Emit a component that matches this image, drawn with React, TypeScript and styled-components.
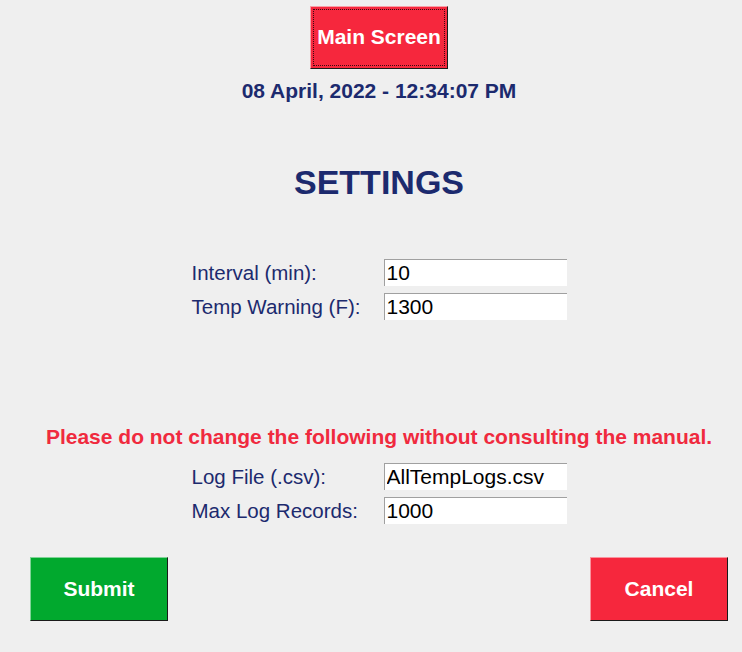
import React from 'react'
import styled, { createGlobalStyle } from 'styled-components'

const GlobalStyle = createGlobalStyle`
  html, body {
    margin: 0;
    padding: 0;
    background: #efefef;
  }
  body {
    font-family: "Liberation Sans", Arial, sans-serif;
  }
`

interface Field {
  label: string
  value: string
}

const mainFields: Field[] = [
  { label: 'Interval (min):', value: '10' },
  { label: 'Temp Warning (F):', value: '1300' },
]

const fileFields: Field[] = [
  { label: 'Log File (.csv):', value: 'AllTempLogs.csv' },
  { label: 'Max Log Records:', value: '1000' },
]

const FieldGrid: React.FC<{ fields: Field[] }> = ({ fields }) => (
  <Grid>
    {fields.map((f) => (
      <React.Fragment key={f.label}>
        <Label>{f.label}</Label>
        <Input defaultValue={f.value} />
      </React.Fragment>
    ))}
  </Grid>
)

export default function App() {
  return (
    <>
      <GlobalStyle />
      <Page>
        <MainButton>
          <FocusRing>Main Screen</FocusRing>
        </MainButton>
        <DateLine>08 April, 2022 - 12:34:07 PM</DateLine>
        <Heading>SETTINGS</Heading>
        <FieldGrid fields={mainFields} />
        <Warning>Please do not change the following without consulting the manual.</Warning>
        <FieldGrid fields={fileFields} />
        <Actions>
          <ActionButton $color="#01a92e">Submit</ActionButton>
          <ActionButton $color="#f6273d">Cancel</ActionButton>
        </Actions>
      </Page>
    </>
  )
}

const Page = styled.div`
  width: 742px;
  height: 652px;
  box-sizing: border-box;
  padding: 6px 14px 0 30px;
  display: flex;
  flex-direction: column;
  align-items: center;
  background: #efefef;
`

const MainButton = styled.button`
  width: 138px;
  height: 63px;
  padding: 2px;
  background: #f6273d;
  border: 1px solid;
  border-color: #f7a0a8 #1a1a1a #1a1a1a #f7a0a8;
  font-family: "Liberation Sans", Arial, sans-serif;
  cursor: pointer;
`

const FocusRing = styled.span`
  display: flex;
  align-items: center;
  justify-content: center;
  height: 100%;
  padding-bottom: 2px;
  box-sizing: border-box;
  border: 1px dotted #3a0a10;
  color: #ffffff;
  font-size: 21px;
  font-weight: bold;
`

const DateLine = styled.div`
  margin-top: 10px;
  color: #1c2a6e;
  font-size: 21px;
  font-weight: bold;
  line-height: 23px;
`

const Heading = styled.h1`
  margin: 62px 0 0;
  color: #1c2a6e;
  font-size: 34px;
  font-weight: bold;
  line-height: 37px;
`

const Grid = styled.div`
  display: grid;
  grid-template-columns: 192px 183px;
  row-gap: 7px;
  margin-top: 58px;
`

const Label = styled.div`
  color: #1c2a6e;
  font-size: 20.5px;
  line-height: 27px;
`

const Input = styled.input`
  box-sizing: border-box;
  width: 183px;
  height: 27px;
  margin: 0;
  padding: 0 2px;
  border: none;
  border-top: 1px solid #a0a0a0;
  border-left: 1px solid #a0a0a0;
  background: #ffffff;
  color: #000000;
  font-family: "Liberation Sans", Arial, sans-serif;
  font-size: 21px;
  outline: none;
`

const Warning = styled.div`
  margin-top: 105px;
  margin-bottom: -43px;
  color: #f02a3e;
  font-size: 21px;
  font-weight: bold;
  line-height: 23px;
`

const Actions = styled.div`
  align-self: stretch;
  display: flex;
  justify-content: space-between;
  margin-top: 33px;
`

const ActionButton = styled.button<{ $color: string }>`
  width: 138px;
  height: 64px;
  background: ${({ $color }) => $color};
  border: 1px solid;
  border-color: rgba(255, 255, 255, 0.5) #1a1a1a #1a1a1a rgba(255, 255, 255, 0.5);
  color: #ffffff;
  font-family: "Liberation Sans", Arial, sans-serif;
  font-size: 21px;
  font-weight: bold;
  cursor: pointer;
`
